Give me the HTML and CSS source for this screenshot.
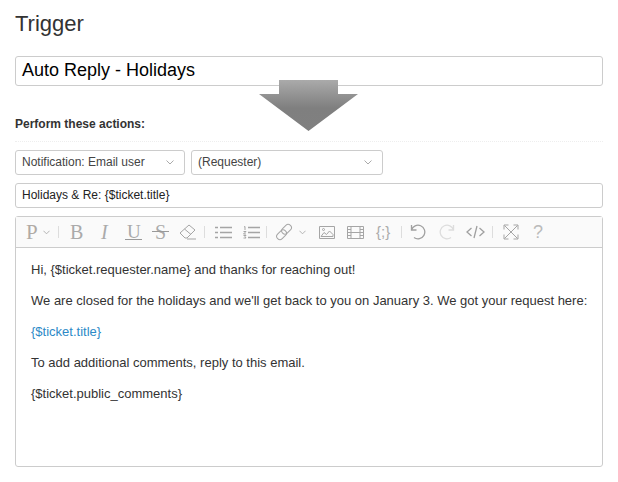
FILE: index.html
```html
<!DOCTYPE html>
<html lang="en">
<head>
    <meta charset="UTF-8">
    <meta name="viewport" content="width=device-width, initial-scale=1.0">
    <title>Trigger</title>
    <link rel="stylesheet" href="styles.css">
</head>
<body>
    <h1 class="page-title">Trigger</h1>
    <div class="field name-field">Auto Reply - Holidays</div>

    <h2 class="section-label">Perform these actions:</h2>

    <!-- big grey arrow sits on top of the form -->
    <svg class="big-arrow" width="100" height="52" viewBox="0 0 100 52">
        <defs>
            <linearGradient id="arrow-fill" x1="0" y1="0" x2="0" y2="1">
                <stop offset="0" stop-color="#aaaaaa"/>
                <stop offset="0.55" stop-color="#7f7f7f"/>
                <stop offset="1" stop-color="#808080"/>
            </linearGradient>
        </defs>
        <path d="M20 0H79V14H99L49.500 51L0 14H20Z" fill="url(#arrow-fill)"/>
    </svg>

    <div class="select-row">
        <div class="select select-type">
            <span>Notification: Email user</span>
            <svg class="chevron" width="8" height="5" viewBox="0 0 8 5"><path d="M.5.500 4 4 7.500.5"/></svg>
        </div>
        <div class="select select-target">
            <span>(Requester)</span>
            <svg class="chevron" width="8" height="5" viewBox="0 0 8 5"><path d="M.5.500 4 4 7.500.5"/></svg>
        </div>
    </div>

    <div class="field subject-field">Holidays &amp; Re: {$ticket.title}</div>

    <div class="editor">
        <div class="toolbar">
            <span class="tool-text tool-p">P</span>
            <svg class="chevron chevron-p" width="7" height="5" viewBox="0 0 8 5"><path d="M.5.500 4 4 7.500.5"/></svg>
            <i class="sep sep-1"></i>
            <span class="tool-text tool-b">B</span>
            <span class="tool-text tool-i">I</span>
            <span class="tool-text tool-u">U</span>
            <span class="tool-text tool-s">S</span>
            <svg class="icon tool-eraser" width="18" height="17" viewBox="0 0 18 17">
                <path d="M1 10 10 2l6 5-8 8H6z"/><path d="M5.500 6 12 11.500M8 16h9"/>
            </svg>
            <i class="sep sep-2"></i>
            <svg class="icon tool-ul" width="17" height="13" viewBox="0 0 17 13">
                <path d="M0 1.500h3M5 1.500h12M0 6.500h3M5 6.500h12M0 11.500h3M5 11.500h12" stroke-width="1.500"/>
            </svg>
            <svg class="icon tool-ol" width="17" height="13" viewBox="0 0 17 13">
                <path d="M1 1 2 .5V4M.5 5.500H3L.5 8H3M.5 9.500H3L2 10.500l1 1.500H.5"/>
                <path d="M5 1.500h12M5 6.500h12M5 11.500h12" stroke-width="1.500"/>
            </svg>
            <i class="sep sep-3"></i>
            <svg class="icon tool-link" width="18" height="18" viewBox="0 0 18 18">
                <rect x="1" y="8.500" width="11" height="6.500" rx="3.200" transform="rotate(-45 6.500 11.700)"/>
                <rect x="6" y="3" width="11" height="6.500" rx="3.200" transform="rotate(-45 11.500 6.200)"/>
            </svg>
            <svg class="chevron chevron-link" width="7" height="5" viewBox="0 0 8 5"><path d="M.5.500 4 4 7.500.5"/></svg>
            <svg class="icon tool-image" width="16" height="13" viewBox="0 0 16 13">
                <path d="M.5.500h15v12H.500z"/><path d="M2 10.500l3-4 2.500 2 3-3.500 3.500 3.500v2z"/><circle cx="4.500" cy="3.500" r="1"/>
            </svg>
            <svg class="icon tool-film" width="17" height="13" viewBox="0 0 17 13">
                <path d="M.5.500h16v12H.500zM4 .5v12M13 .5v12M4 6.500h9M.5 3.500H4M.5 6.500H4M.5 9.500H4M13 3.500h3.500M13 6.500h3.500M13 9.500h3.500"/>
            </svg>
            <span class="tool-text tool-braces">{;}</span>
            <i class="sep sep-4"></i>
            <svg class="icon icon-thick tool-undo" width="16" height="16" viewBox="0 0 16 16">
                <path d="M1.500 1v5h5"/><path d="M1.500 6A6.800 6.800 0 1 1 4 13.500"/>
            </svg>
            <svg class="icon icon-faint tool-redo" width="16" height="16" viewBox="0 0 16 16">
                <path d="M14.500 1v5h-5"/><path d="M14.500 6A6.800 6.800 0 1 0 12 13.500"/>
            </svg>
            <svg class="icon icon-thick tool-code" width="19" height="14" viewBox="0 0 19 14">
                <path d="M5.500 3 1 7l4.500 4M13.500 3 18 7l-4.500 4M11 1 8 13"/>
            </svg>
            <i class="sep sep-5"></i>
            <svg class="icon tool-full" width="16" height="16" viewBox="0 0 16 16">
                <path d="M1 5.500V1h4.500M10.500 1H15v4.500M15 10.500V15h-4.500M5.500 15H1v-4.500M1.500 1.500l13 13M14.500 1.500l-13 13"/>
            </svg>
            <span class="tool-text tool-help">?</span>
        </div>
        <div class="editor-body">
            <p>Hi, {$ticket.requester.name} and thanks for reaching out!</p>
            <p>We are closed for the holidays and we'll get back to you on January 3. We got your request here:</p>
            <p><a href="#">{$ticket.title}</a></p>
            <p>To add additional comments, reply to this email.</p>
            <p>{$ticket.public_comments}</p>
        </div>
    </div>
</body>
</html>
```

FILE: styles.css
```css
body {
    position: relative;
    margin: 0;
    padding: 0 15px;
    height: 482px;
    box-sizing: border-box;
    overflow: hidden;
    font-family: 'Liberation Sans', Arial, sans-serif;
    font-size: 12px;
    color: #333;
    background-color: #fff;
}

.page-title {
    margin: 0;
    padding-top: 11px;
    font-size: 22px;
    line-height: 25px;
    font-weight: normal;
}

.field {
    box-sizing: border-box;
    width: 588px;
    border: 1px solid #ccc;
    border-radius: 3px;
    background-color: #fff;
    color: #000;
}

.name-field {
    height: 30px;
    margin-top: 20px;
    padding-left: 6px;
    font-size: 18px;
    line-height: 26px;
}

.section-label {
    margin: 0;
    padding: 31px 0 9px;
    border-bottom: 1px dotted #eee;
    height: 15px;
    font-size: 12px;
    line-height: 15px;
    color: #333;
}

.big-arrow {
    position: absolute;
    left: 259px;
    top: 80px;
}

.select-row {
    display: flex;
    gap: 6px;
    margin-top: 8px;
}

.select {
    box-sizing: border-box;
    display: flex;
    align-items: center;
    justify-content: space-between;
    height: 25px;
    padding: 0 10px 0 6px;
    border: 1px solid #ccc;
    border-radius: 3px;
    color: #444;
}

.select span {
    margin-bottom: 2px;
}

.select-type {
    width: 170px;
}

.select-target {
    width: 192px;
}

.chevron {
    fill: none;
    stroke: #aaa;
}

.subject-field {
    height: 25px;
    margin-top: 8px;
    padding-left: 6px;
    line-height: 23px;
    color: #222;
}

.editor {
    box-sizing: border-box;
    width: 588px;
    height: 251px;
    margin-top: 8px;
    border: 1px solid #ccc;
    border-radius: 3px;
}

.toolbar {
    position: relative;
    height: 30px;
    border-bottom: 1px solid #ccc;
    background-color: #fafafa;
}

/* toolbar icons sit at fixed spots along the bar, x minus the 16px editor edge */
.toolbar > * {
    position: absolute;
}

.tool-text {
    font-family: 'Liberation Serif', serif;
    font-size: 20px;
    line-height: 30px;
    color: #aaa;
    top: 0;
}

.icon {
    fill: none;
    stroke: #a5a5a5;
}

.icon-thick {
    stroke: #a0a0a0;
    stroke-width: 1.3;
}

.icon-faint {
    stroke: #ddd;
    stroke-width: 1.3;
}

.sep {
    top: 9px;
    width: 1px;
    height: 12px;
    background-color: #ddd;
}

/* wide rule under the U and through the S, wider than the letter itself */
.tool-u::after,
.tool-s::after {
    content: "";
    position: absolute;
    height: 1px;
    background-color: #999;
}

.tool-u::after { top: 22px; left: -2px; right: -1px; }
.tool-s::after { top: 14px; left: -3px; right: -3px; }

.tool-p { left: 10px; font-size: 21px; color: #b0aaa5; }
.chevron-p { left: 27px; top: 13px; }
.sep-1 { left: 42px; }
.tool-b { left: 54px; }
.tool-i { left: 85px; font-style: italic; }
.tool-u { left: 111px; font-size: 19px; }
.tool-s { left: 139px; }
.tool-eraser { left: 163px; top: 6px; }
.sep-2 { left: 188px; }
.tool-ul { left: 199px; top: 9px; }
.tool-ol { left: 227px; top: 9px; }
.sep-3 { left: 250px; }
.tool-link { left: 259px; top: 6px; }
.chevron-link { left: 283px; top: 13px; }
.tool-image { left: 303px; top: 9px; }
.tool-film { left: 331px; top: 9px; }
.tool-braces { left: 360px; font-size: 15px; font-family: 'Liberation Sans', sans-serif; }
.sep-4 { left: 385px; }
.tool-undo { left: 394px; top: 7px; }
.tool-redo { left: 423px; top: 7px; }
.tool-code { left: 450px; top: 8px; }
.sep-5 { left: 476px; }
.tool-full { left: 487px; top: 7px; }
.tool-help { left: 517px; font-family: 'Liberation Sans', sans-serif; font-size: 18px; color: #bbb; }

.editor-body {
    padding: 6px 5px 6px 15px;
}

.editor-body p {
    margin: 0;
    padding: 8px 0;
    font-size: 13px;
    line-height: 15px;
}

.editor-body a {
    color: #2d8ac7;
    text-decoration: none;
}
```
